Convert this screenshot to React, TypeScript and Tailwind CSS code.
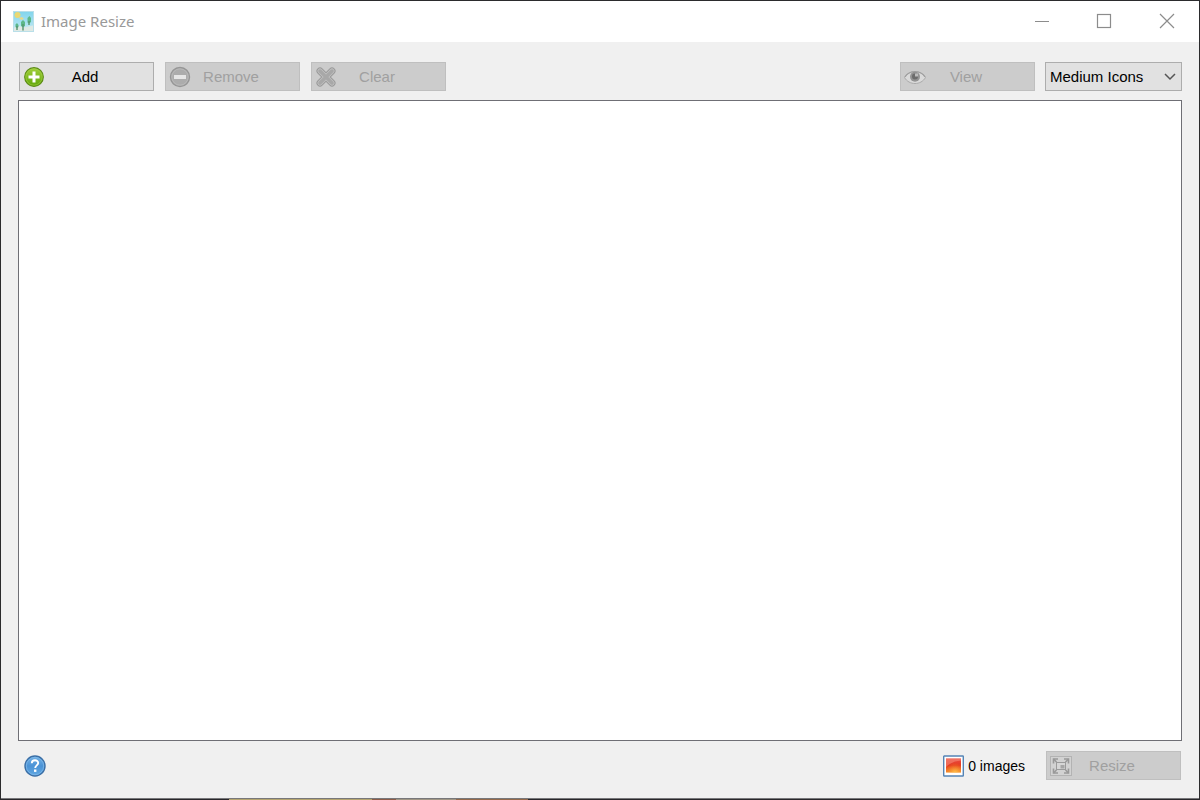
import type { ReactNode } from 'react';

function AppIcon() {
  return (
    <svg width="21" height="21" viewBox="0 0 21 21" aria-hidden="true">
      <defs>
        <linearGradient id="sky" x1="0" y1="0" x2="0" y2="1">
          <stop offset="0" stopColor="#7fd4ec" />
          <stop offset="0.65" stopColor="#aee3f1" />
          <stop offset="1" stopColor="#e4eff0" />
        </linearGradient>
      </defs>
      <rect width="21" height="21" fill="url(#sky)" />
      <rect x="0.5" y="0.5" width="20" height="20" fill="none" stroke="#b9dfe9" />
      <circle cx="4.5" cy="4" r="3" fill="#ead873" />
      <path d="M6 7l3-1 2 2-3 1z" fill="#e8d98a" />
      <path d="M1 17l5-2 5 1.5 9-2V20H1z" fill="#dfe9e4" />
      <path d="M8 11l2-2 2 2v4l-2 1-2-1zM14.500 7l2-2 1.500 2v4l-2 1.500-1.500-1zM2.500 13.500l1.500-1.500 1.500 2v2l-1.500 1-1.500-1z" fill="#5cb88a" />
      <path d="M10 13v6.500M16 10v4M4 15v4" stroke="#55946f" strokeWidth="1.400" />
    </svg>
  );
}

function AddIcon() {
  return (
    <svg width="22" height="22" viewBox="0 0 22 22" aria-hidden="true">
      <defs>
        <linearGradient id="green" x1="0" y1="0" x2="0" y2="1">
          <stop offset="0" stopColor="#a3d13c" />
          <stop offset="1" stopColor="#5fa50a" />
        </linearGradient>
      </defs>
      <circle cx="11" cy="11" r="9.300" fill="url(#green)" stroke="#5b8c14" strokeWidth="1.200" />
      <circle cx="11" cy="11" r="8.200" fill="none" stroke="#a5cf48" strokeWidth="0.600" />
      <path d="M9.500 5.500h3v4h4v3h-4v4h-3v-4h-4v-3h4z" fill="#fff" />
    </svg>
  );
}

function RemoveIcon() {
  return (
    <svg width="22" height="22" viewBox="0 0 22 22" aria-hidden="true">
      <circle cx="11" cy="11" r="9.500" fill="#acacac" stroke="#969696" strokeWidth="1.400" />
      <circle cx="11" cy="11" r="8.200" fill="none" stroke="#bdbdbd" strokeWidth="0.800" />
      <rect x="5" y="9" width="12" height="4" fill="#e6e6e6" />
    </svg>
  );
}

function ClearIcon() {
  return (
    <svg width="22" height="22" viewBox="0 0 22 22" aria-hidden="true" strokeLinecap="round">
      <path d="M5 5l12 12M17 5L5 17" stroke="#999" strokeWidth="7" />
      <path d="M5 5l12 12M17 5L5 17" stroke="#c0c0c0" strokeWidth="5.200" />
      <path d="M5 5l12 12M17 5L5 17" stroke="#a8a8a8" strokeWidth="3.400" />
    </svg>
  );
}

function EyeIcon() {
  return (
    <svg width="22" height="22" viewBox="0 0 22 22" aria-hidden="true">
      <path d="M0.500 11.500C5 3.500 17 3.500 21.500 11.500C17 19.500 5 19.500 0.500 11.500z" fill="#dadada" stroke="#aaa" />
      <path d="M1 11C5 4 17 4 21 11" fill="none" stroke="#9e9e9e" strokeWidth="1.200" />
      <circle cx="11" cy="10.800" r="5" fill="#939393" />
      <circle cx="11" cy="10.500" r="3" fill="#6c6c6c" />
      <rect x="11" y="7.500" width="3" height="3" fill="#bcbcbc" />
    </svg>
  );
}

function ResizeIcon() {
  return (
    <svg width="22" height="22" viewBox="0 0 22 22" aria-hidden="true" fill="none">
      <rect x="0.500" y="1.500" width="21" height="19" fill="#d2d2d2" stroke="#b3b3b3" />
      <path d="M3.500 8.500V4h4.500M18.500 8.500V4h-4.500M18.500 13.500V18h-4.500M3.500 13.500V18h4.500" stroke="#999" strokeWidth="1.600" />
      <path d="M3.500 4l3 3M18.500 4l-3 3M18.500 18l-3-3M3.500 18l3-3" stroke="#999" strokeWidth="1.600" />
      <rect x="6.500" y="7.500" width="9" height="7" fill="#d6d6d6" stroke="#9b9b9b" />
      <rect x="10.500" y="10" width="4" height="3.500" fill="#a6a6a6" />
    </svg>
  );
}

function HelpIcon() {
  return (
    <svg width="22" height="22" viewBox="0 0 22 22" aria-hidden="true">
      <defs>
        <linearGradient id="blue" x1="0" y1="0" x2="0" y2="1">
          <stop offset="0" stopColor="#74b2e5" />
          <stop offset="0.500" stopColor="#4b93d6" />
          <stop offset="1" stopColor="#62a8e2" />
        </linearGradient>
      </defs>
      <circle cx="11" cy="11" r="10" fill="url(#blue)" stroke="#3b6fa6" strokeWidth="1.400" />
      <circle cx="11" cy="11" r="8.700" fill="none" stroke="#7db8e8" strokeWidth="0.800" />
      <path d="M7.800 8.200C7.800 4.300 14.200 4.300 14.200 8C14.200 10.300 11.200 10.500 11.200 13" fill="none" stroke="#fff" strokeWidth="1.900" />
      <rect x="10" y="14.500" width="2.400" height="2.400" fill="#fff" />
    </svg>
  );
}

function PictureIcon() {
  return (
    <svg width="21" height="22" viewBox="0 0 21 22" aria-hidden="true">
      <defs>
        <linearGradient id="flame" x1="0" y1="0" x2="0" y2="1">
          <stop offset="0" stopColor="#e94f45" />
          <stop offset="0.500" stopColor="#e5371f" />
          <stop offset="1" stopColor="#f58a27" />
        </linearGradient>
        <radialGradient id="glow" cx="0.600" cy="1" r="0.700">
          <stop offset="0" stopColor="#ffc24a" />
          <stop offset="1" stopColor="#f58a27" stopOpacity="0" />
        </radialGradient>
      </defs>
      <rect x="0.700" y="1" width="19.600" height="20" rx="0.500" fill="#fff" stroke="#5584b5" strokeWidth="1.400" />
      <rect x="3" y="3.500" width="15" height="14" fill="url(#flame)" />
      <path d="M3 3.500h15v2C12 6 7 8 3 12z" fill="#f58b78" opacity="0.600" />
      <rect x="3" y="3.500" width="15" height="14" fill="url(#glow)" />
    </svg>
  );
}

type ToolButtonProps = { icon: ReactNode; label: string; disabled?: boolean };

function ToolButton({ icon, label, disabled }: ToolButtonProps) {
  return (
    <button
      type="button"
      disabled={disabled}
      className="flex h-[29px] w-[135px] items-center border border-[#adadad] bg-[#e1e1e1] pr-7 pl-[3px] text-black disabled:border-[#bfbfbf] disabled:bg-[#cccccc] disabled:text-[#a0a0a0]"
    >
      {icon}
      <span className="flex-1 text-center">{label}</span>
    </button>
  );
}

export default function App() {
  return (
    <div className="flex min-h-screen flex-col border-x border-t border-[#2b2b2d] bg-[#f0f0f0] font-['Liberation_Sans',sans-serif] text-[15px] leading-5">
      <header className="flex h-[41px] items-center justify-between bg-white pb-px pl-3">
        <div className="flex items-center gap-[7px]">
          <AppIcon />
          <h1 className="font-['Noto_Sans',sans-serif] text-[15px] text-[#999]">Image Resize</h1>
        </div>
        <div className="flex text-[#8c8c8c]">
          <button type="button" aria-label="Minimize" className="flex h-10 w-[62px] items-center justify-center">
            <svg width="16" height="16" viewBox="0 0 16 16"><path d="M1 8.500h14" stroke="currentColor" /></svg>
          </button>
          <button type="button" aria-label="Maximize" className="flex h-10 w-[62px] items-center justify-center">
            <svg width="16" height="16" viewBox="0 0 16 16"><rect x="1.500" y="1.500" width="13" height="13" fill="none" stroke="currentColor" strokeWidth="1.200" /></svg>
          </button>
          <button type="button" aria-label="Close" className="flex h-10 w-[64px] items-center justify-center">
            <svg width="16" height="16" viewBox="0 0 16 16"><path d="M1 1l14 14M15 1L1 15" stroke="currentColor" strokeWidth="1.200" /></svg>
          </button>
        </div>
      </header>

      <main className="flex flex-1 flex-col px-[17px] pt-5 pb-[18px]">
        <div className="flex items-center justify-between pl-px">
          <div className="flex gap-[11px]">
            <ToolButton icon={<AddIcon />} label="Add" />
            <ToolButton icon={<RemoveIcon />} label="Remove" disabled />
            <ToolButton icon={<ClearIcon />} label="Clear" disabled />
          </div>
          <div className="flex gap-2.5">
            <ToolButton icon={<EyeIcon />} label="View" disabled />
            <div className="grid w-[137px] items-center">
              <select
                aria-label="Icon size"
                defaultValue="Medium Icons"
                className="col-start-1 row-start-1 h-[29px] w-full appearance-none rounded-none border border-[#adadad] bg-[#e1e1e1] pr-6 pl-1 text-black"
              >
                <option>Small Icons</option>
                <option>Medium Icons</option>
                <option>Large Icons</option>
              </select>
              <svg width="12" height="8" viewBox="0 0 12 8" className="pointer-events-none col-start-1 row-start-1 mr-1.5 justify-self-end" fill="none" aria-hidden="true">
                <path d="M1 1l5 5 5-5" stroke="#555" strokeWidth="1.500" />
              </svg>
            </div>
          </div>
        </div>

        <section aria-label="Images" className="mt-[9px] mb-2.5 flex-1 border border-[#6f6f75] bg-white" />

        <div className="flex items-center justify-between pr-px pl-1.5">
          <button type="button" aria-label="Help">
            <HelpIcon />
          </button>
          <div className="flex items-center">
            <PictureIcon />
            <span className="mr-[21px] ml-1 text-[14px] text-black">0 images</span>
            <ToolButton icon={<ResizeIcon />} label="Resize" disabled />
          </div>
        </div>
      </main>
      <div className="flex h-0.5 border-t border-[#77777a] bg-[#29272a]">
        <div className="ml-[19%] h-px w-[12%] bg-[#b5a56f]" />
        <div className="h-px w-[2%] bg-[#8d5c48]" />
        <div className="h-px w-[5%] bg-[#a09684]" />
        <div className="h-px w-[6%] bg-[#94694a]" />
      </div>
    </div>
  );
}
